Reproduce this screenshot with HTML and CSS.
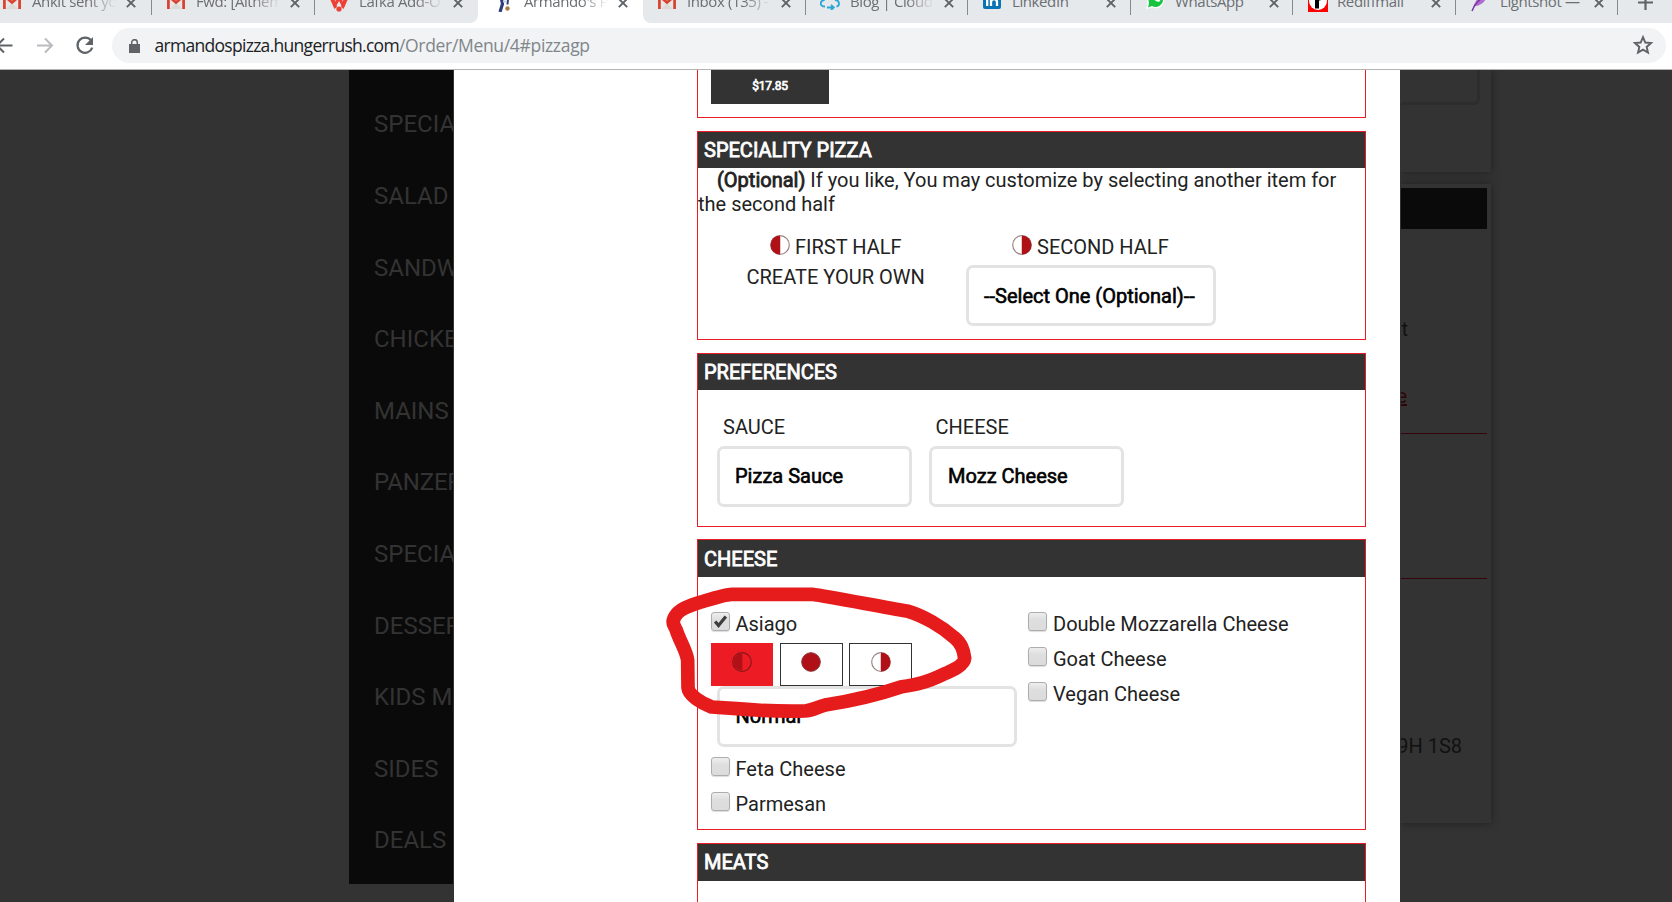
FILE: index.html
```html
<!DOCTYPE html>
<html lang="en">
<head>
<meta charset="utf-8">
<title>Armando's Pizza</title>
<link rel="stylesheet" href="styles.css">
</head>
<body>
<svg class="defs" width="0" height="0" aria-hidden="true">
  <symbol id="close" viewBox="0 0 10 10"><path d="M.8.8 9.2 9.2M9.2.8.8 9.2" stroke="#5f6368" stroke-width="1.9"/></symbol>
  <symbol id="gmail" viewBox="0 0 18 14"><path d="M1 0h16v14H1z" fill="#e8e6e4"/><path d="M3 14 9 8l6 6z" fill="#dcdad8"/><path d="M1.4 14V1L9 7.5 16.600 1v13" fill="none" stroke="#d8412f" stroke-width="2.700"/></symbol>
  <symbol id="half-left" viewBox="0 0 20 20"><circle cx="10" cy="10" r="9.300" fill="#fff" stroke="#9b8585" stroke-width="1.200"/><path d="M10 .5a9.500 9.500 0 0 0 0 19z" fill="#b01116"/><path d="M10.500 1v18" stroke="#e3c9c9"/></symbol>
  <symbol id="half-right" viewBox="0 0 20 20"><circle cx="10" cy="10" r="9.300" fill="#fff" stroke="#9b8585" stroke-width="1.200"/><path d="M10 .5a9.500 9.500 0 0 1 0 19z" fill="#b01116"/><path d="M9.500 1v18" stroke="#e3c9c9"/></symbol>
  <symbol id="whole" viewBox="0 0 20 20"><circle cx="10" cy="10" r="9.300" fill="#b01116" stroke="#8a3036"/></symbol>
  <symbol id="half-active" viewBox="0 0 20 20"><circle cx="10" cy="10" r="9.300" fill="#ed1c24" stroke="#87161b" stroke-width="1.200"/><path d="M10 1.500a8.500 8.500 0 0 0 0 17z" fill="#b01116"/><path d="M10.500 1v18" stroke="#d21a21"/></symbol>
</svg>

<div class="tabs">
  <div class="tab first"><svg class="fav" viewBox="0 0 18 14"><use href="#gmail"/></svg><span class="label fade">Ankit sent yo</span><svg class="x"><use href="#close"/></svg></div>
  <div class="tab"><svg class="fav" viewBox="0 0 18 14"><use href="#gmail"/></svg><span class="label fade">Fwd: [Althem</span><svg class="x"><use href="#close"/></svg></div>
  <div class="tab before-active"><svg class="fav adobe" viewBox="0 0 18 17"><path d="M0 4 4 3l3 9-2.500 2z" fill="#ed4136"/><path d="M18 4 14 3l-3 9 2.500 2z" fill="#ed4136"/><path d="M6 4h6l2.500 8-2.500-.5L9 6l-3 5.500-2.500.5z" fill="#ed4136"/><circle cx="9" cy="14" r="2.600" fill="#ed4136"/></svg><span class="label fade">Lafka Add-O</span><svg class="x"><use href="#close"/></svg></div>
  <div class="tab active"><svg class="fav chef" viewBox="0 0 18 17"><path d="M4 4 8 3 13 4 12.500 9.500" fill="none" stroke="#2b3d7a" stroke-width="2"/><path d="M6.500 4 7.500 9 5 17" fill="none" stroke="#2b3d7a" stroke-width="3.200"/><path d="M8 5.500h3v2H8z" fill="#c9cde4"/><circle cx="12.500" cy="13.500" r="2.200" fill="#a97b44"/></svg><span class="label fade">Armando's P</span><svg class="x"><use href="#close"/></svg></div>
  <div class="tab after-active"><svg class="fav" viewBox="0 0 18 14"><use href="#gmail"/></svg><span class="label fade">Inbox (135) -</span><svg class="x"><use href="#close"/></svg></div>
  <div class="tab w162"><svg class="fav cloud" viewBox="0 0 20 14"><path d="M5 10.500C-1 10.500 0 4 4 4.500M15 4c5 0 5 6 1.500 6.500M4 4.500C5-1 14-2 15 4" fill="none" stroke="#2ba6d6" stroke-width="1.800"/><path d="M7 11.500h6M11 8.800l2.800 2.700L11 14" fill="none" stroke="#2ba6d6" stroke-width="1.800"/></svg><span class="label fade">Blog | Cloud</span><svg class="x"><use href="#close"/></svg></div>
  <div class="tab"><svg class="fav" viewBox="0 0 18 14"><path d="M0 0h18v12q0 2-2 2H2q-2 0-2-2z" fill="#0a73b1"/><path d="M4.200 3.500V11M8 11V3.500M8 7q0-3 3-3t3 3v4" fill="none" stroke="#fff" stroke-width="2.300"/><circle cx="4.200" cy="1" r="1.300" fill="#fff"/></svg><span class="label">LinkedIn</span><svg class="x"><use href="#close"/></svg></div>
  <div class="tab w162"><svg class="fav" viewBox="0 0 18 14"><path d="M0 0h18v5a8.500 8.500 0 0 1-12 7.500L0 14l1.500-5z" fill="#fff"/><path d="M1.500-2h15.500v6a7.500 7.500 0 0 1-11 7L2 12.500 3 8.500z" fill="#16c43f"/><path d="M5.500 0q1 5.500 7.500 7l1.500-2-2.500-1.700-1.500 1L7.500 1.500" fill="#fff"/></svg><span class="label">WhatsApp</span><svg class="x"><use href="#close"/></svg></div>
  <div class="tab"><svg class="fav redf" viewBox="0 0 20 15"><path d="M0 0h20v15H0z" fill="#f00"/><circle cx="10" cy="4" r="9" fill="#fff"/><path d="M9 11.500V0M9 1.500H12.500" stroke="#000" stroke-width="4"/></svg><span class="label">Rediffmail</span><svg class="x"><use href="#close"/></svg></div>
  <div class="tab w162"><svg class="fav shot" viewBox="0 0 18 14"><path d="M1 13C3 7 6 0 13-4l4 1C15 5 9 9 4 9z" fill="#b06fd0"/><path d="M1 14Q4 6 12 0" fill="none" stroke="#7735a5" stroke-width="1.500"/></svg><span class="label">Lightshot —</span><svg class="x"><use href="#close"/></svg></div>
  <svg class="plus" viewBox="0 0 15 15"><path d="M7.500 0v15M0 7.500h15" stroke="#5f6368" stroke-width="2.200"/></svg>
</div>

<div class="toolbar">
  <svg class="nav" viewBox="0 0 112 46"><g fill="none" stroke-width="2"><path d="M12.500 22.500H-2M4 15.500l-7 7 7 7" stroke="#5f6368"/><path d="M37 22.500h14.500M45 15.500l7 7-7 7" stroke="#b9bbbe"/><path d="M91 17.300a7.600 7.600 0 1 0 1.300 7.400" stroke="#5f6368" stroke-width="2.200"/></g><path d="M93 14v8h-8z" fill="#5f6368"/></svg>
  <div class="url">
    <svg class="lock" viewBox="0 0 11 14"><path d="M0 5h11v9H0z" fill="#5f6368"/><path d="M2.700 5.500V3.500a2.800 2.800 0 0 1 5.600 0v2" fill="none" stroke="#5f6368" stroke-width="1.500"/></svg>
    <span class="addr"><span class="host">armandospizza.hungerrush.com</span><span class="path">/Order/Menu/4#pizzagp</span></span>
    <svg class="star" viewBox="0 0 24 24"><path d="m12 3.500 2.500 5.800 6.300.6-4.800 4.200 1.400 6.200L12 17l-5.400 3.300L8 14.100 3.200 9.900l6.300-.6z" fill="none" stroke="#5f6368" stroke-width="2.100"/></svg>
  </div>
</div>

<main class="page">
  <nav class="menu">
    <span>SPECIA</span><span>SALAD</span><span>SANDW</span><span>CHICKE</span><span>MAINS</span><span class="tight">PANZER</span><span>SPECIA</span><span>DESSER</span><span>KIDS M</span><span>SIDES</span><span>DEALS</span>
  </nav>

  <div class="modal">
    <section class="box sizes"><div class="price">$17.85</div></section>

    <section class="box special">
      <h2>SPECIALITY PIZZA</h2>
      <p class="note"><b>(Optional)</b> If you like, You may customize by selecting another item for the second half</p>
      <div class="halves">
        <div class="half one">
          <div class="half-name"><svg class="pie"><use href="#half-left"/></svg>FIRST HALF</div>
          <div class="own">CREATE YOUR OWN</div>
        </div>
        <div class="half two">
          <div class="half-name"><svg class="pie"><use href="#half-right"/></svg>SECOND HALF</div>
          <div class="select">--Select One (Optional)--</div>
        </div>
      </div>
    </section>

    <section class="box prefs">
      <h2>PREFERENCES</h2>
      <div class="fields">
        <div class="field"><label>SAUCE</label><div class="select">Pizza Sauce</div></div>
        <div class="field wide"><label>CHEESE</label><div class="select">Mozz Cheese</div></div>
      </div>
    </section>

    <section class="box cheese">
      <h2 class="tall">CHEESE</h2>
      <div class="toppings">
        <div class="col">
          <div class="opt picked"><i class="check"><svg viewBox="0 0 19 19"><path d="m3.500 9.500 3.800 4.500L15.500 4" fill="none" stroke="#3d3d3d" stroke-width="3.600"/></svg></i>Asiago</div>
          <div class="parts">
            <div class="part on"><svg class="pie"><use href="#half-active"/></svg></div>
            <div class="part"><svg class="pie"><use href="#whole"/></svg></div>
            <div class="part last"><svg class="pie"><use href="#half-right"/></svg></div>
          </div>
          <div class="select amount">Normal</div>
          <div class="opt"><i class="check"></i>Feta Cheese</div>
          <div class="opt"><i class="check"></i>Parmesan</div>
        </div>
        <div class="col right">
          <div class="opt"><i class="check"></i>Double Mozzarella Cheese</div>
          <div class="opt"><i class="check"></i>Goat Cheese</div>
          <div class="opt"><i class="check"></i>Vegan Cheese</div>
        </div>
      </div>
      <svg class="marker" viewBox="0 0 1140 996"><path d="M44 170C36 158 39 145 52 130C66 114 95 105 120 97C150 88 195 73 215 73L455 73C510 80 650 108 745 124C790 137 845 170 882 202C905 221 911 240 914 265C912 285 880 300 850 313C800 337 770 344 725 350C660 372 590 390 500 404C470 412 455 422 435 423C360 425 290 421 230 416L155 411C125 400 85 375 84 353L83 270C78 240 60 215 48 178"/></svg>
    </section>

    <section class="box meats"><h2 class="tall">MEATS</h2></section>
  </div>

  <aside class="side">
    <div class="card top"><div class="input"></div></div>
    <div class="card order">
      <div class="bar"></div>
      <div class="line t">t</div>
      <div class="line link">e</div>
      <div class="rule"></div>
      <div class="rule second"></div>
      <div class="line postal">9H 1S8</div>
    </div>
  </aside>
</main>
</body>
</html>
```
FILE: styles.css
```css
* { box-sizing: border-box; }
body { margin: 0; width: 1672px; height: 902px; overflow: hidden; background: #333; font-family: Roboto, sans-serif; font-size: 20px; color: #222; }
svg { display: block; flex: none; }
.defs { position: absolute; }

/* browser tabs */
.tabs { display: flex; height: 23px; overflow: hidden; background: linear-gradient(90deg, #fff 700px, #e6e9ec 700px); font: 15px/20px "Open Sans", sans-serif; letter-spacing: -0.4px; color: #6b6e73; }
.tab { display: flex; width: 163px; height: 23px; flex: none; padding-left: 15px; background: #e6e9ec; background-image: linear-gradient(#85888c, #85888c); background-size: 1px 15px; background-position: right top; background-repeat: no-repeat; }
.tab.first { width: 152px; padding-left: 3px; }
.tab.w162 { width: 162px; }
.tab.active { width: 165px; padding-left: 17px; background: #fff; }
.before-active { background-image: none; border-radius: 0 0 8px 0; }
.after-active { border-radius: 0 0 0 8px; }
.fav { width: 18px; height: 14px; margin-top: -5px; overflow: hidden; }
.fav.adobe, .fav.chef { height: 17px; }
.fav.redf { width: 20px; height: 15px; margin-top: -3px; margin-right: -2px; }
.fav.cloud { width: 20px; margin: -4px -1px 0 -1px; }
.fav.shot { height: 14px; margin-top: -3px; overflow: visible; }
.label { width: 84px; height: 20px; margin: -9px 0 0 11px; white-space: nowrap; overflow: hidden; }
.fade { -webkit-mask-image: linear-gradient(90deg, #000 68%, transparent 100%); mask-image: linear-gradient(90deg, #000 68%, transparent 100%); }
.x { width: 10px; height: 10px; margin: -2px 0 0 10px; }
.plus { width: 15px; height: 15px; margin: -5px 0 0 20px; }

/* address bar */
.toolbar { display: flex; height: 47px; background: #fff; border-bottom: 1px solid #b4b4b4; }
.nav { width: 112px; height: 46px; }
.url { display: flex; width: 1554px; height: 35px; margin-top: 5px; padding-left: 17px; border-radius: 18px; background: #f1f3f4; }
.lock { width: 11px; height: 14px; margin-top: 11px; }
.addr { flex: 1; margin-left: 14.500px; font: 17.500px/35px "Open Sans", sans-serif; letter-spacing: -0.71px; color: #80868b; }
.host { color: #202124; }
.path { letter-spacing: -0.32px; }
.star { width: 22px; height: 22px; margin: 6px 12px 0 0; }

.page { display: flex; height: 832px; overflow: hidden; background: #333; }

/* dimmed menu behind the dialog */
.menu { width: 104px; height: 814px; flex: none; margin-left: 349px; padding: 19.400px 0 0 25px; background: #0a0a0a; color: #333; font-size: 24px; line-height: 71.600px; overflow: hidden; white-space: nowrap; }
.menu span { display: block; }
.menu .tight { letter-spacing: -0.2px; }

/* dialog */
.modal { width: 946px; height: 832px; flex: none; margin-left: 1px; padding-left: 243px; background: #fff; overflow: hidden; }
.box { width: 669px; border: 1px solid #ed1c24; margin-bottom: 13px; }
.sizes { height: 48px; border-top: 0; padding-left: 13px; }
.price { width: 118px; height: 34px; background: #333; color: #fff; font-size: 12px; line-height: 33px; letter-spacing: -0.2px; text-align: center; -webkit-text-stroke: .7px #fff; }
h2 { height: 36px; margin: 0; padding-left: 6px; background: #333; color: #fff; font-size: 20px; font-weight: 400; line-height: 37px; -webkit-text-stroke: .8px #fff; }
h2.tall { height: 37px; line-height: 38px; }
.special { height: 209px; }
.note { margin: 0; line-height: 24px; text-indent: 19px; }
.note b { font-weight: 400; -webkit-text-stroke: .8px #222; }
.halves { display: flex; margin-top: 18px; }
.half.one { width: 268px; padding-left: 48.500px; }
.half-name { display: flex; align-items: flex-start; height: 31px; line-height: 27px; gap: 5px; }
.half.one .half-name { padding-left: 23.500px; }
.half.two .half-name { padding-left: 46px; }
.pie { width: 20px; height: 20px; }
.half-name .pie { margin-top: 1px; }
.own { line-height: 25px; }
.select { height: 61px; padding-left: 15px; border: 3px solid #e3e3e3; border-radius: 7px; background: #fff; color: #000; line-height: 56px; -webkit-text-stroke: .6px #000; white-space: nowrap; }
.half.two .select { width: 250px; }
.prefs { height: 174px; margin-bottom: 12px; }
.prefs .select { line-height: 54px; }
.fields { display: flex; gap: 17px; padding: 25px 0 0 19px; }
.field { width: 195px; }
label { display: block; height: 31px; padding-left: 6px; line-height: 25px; }
.wide label { padding-left: 6.500px; }
.wide .select { padding-left: 16px; }
.cheese { position: relative; height: 291px; }
.toppings { display: grid; grid-template-columns: 317px 1fr; padding: 35px 0 0 13px; }
.opt { display: flex; gap: 5.500px; height: 35px; line-height: 24px; }
.right .opt { gap: 6px; }
.picked { height: 31px; }
.check { width: 19px; height: 19px; flex: none; border: 1px solid #adadad; border-radius: 3px; background: linear-gradient(#eee, #dedede 40%, #dcdcdc); box-shadow: 0 1px 1px #ddd; }
.check svg { width: 17px; height: 17px; }
.parts { display: flex; gap: 6px; height: 43px; }
.part { width: 63px; height: 43px; padding: 8px 0 0 20px; border: 1px solid #333; }
.part.last { padding-left: 21px; }
.part.on { border-color: #ed1c24; background: #ed1c24; width: 62px; margin-right: 1px; }
.amount { width: 300px; margin: 0 0 10px 6px; line-height: 55px; padding-left: 15.500px; }
.marker { position: absolute; left: -38px; top: 30px; width: 380px; height: 332px; pointer-events: none; }
.marker path { fill: none; stroke: #e61c1c; stroke-width: 41; stroke-linejoin: round; stroke-linecap: round; }
.meats { height: 80px; }
.meats h2 { line-height: 37px; }

/* dimmed order column */
.side { flex: 1; padding-left: 1px; overflow: hidden; }
.card { width: 90px; background: #333; box-shadow: 0 0 8px #1f1f1f; clip-path: inset(-9px -9px -9px 0); }
.card.top { height: 102px; margin-bottom: 12px; }
.input { width: 79px; height: 35px; border: solid #2d2d2d; border-width: 0 3px 3px 0; border-radius: 0 0 6px 0; }
.order { height: 639px; padding-top: 4px; color: #111; }
.bar { width: 86px; height: 41px; background: #0a0a0a; }
.line { display: flex; justify-content: flex-end; height: 24px; line-height: 24px; }
.line.t { width: 7px; margin-top: 88px; }
.line.link { width: 6px; margin-top: 43px; color: #2d0507; text-decoration: underline; }
.rule { width: 86px; height: 1px; margin-top: 25px; background: #34040a; }
.rule.second { margin-top: 144px; }
.line.postal { width: 61px; margin-top: 155px; white-space: nowrap; }
```
